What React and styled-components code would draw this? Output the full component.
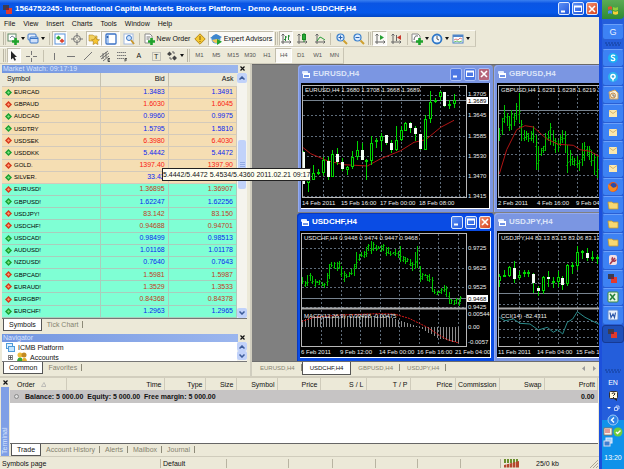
import React from "react";
import styled, { createGlobalStyle, css } from "styled-components";

const Global = createGlobalStyle`
  * { box-sizing: border-box; }
  body { margin: 0; background: #ece9d8; font-family: "Liberation Sans", Arial, sans-serif; font-size: 7px; line-height: 9px; color: #111; overflow: hidden; }
  button { font: inherit; color: inherit; border: 0; padding: 0; margin: 0; background: none; }
  svg { display: block; flex: none; }
  table { border-collapse: collapse; table-layout: fixed; }
`;

/* ---------- shell ---------- */
const Desktop = styled.div`
  display: grid;
  grid-template-columns: minmax(0, 1fr) 22px;
  height: 100vh;
`;
const AppWindow = styled.main`
  display: flex;
  flex-direction: column;
  min-width: 0;
  height: 100vh;
  background: #ece9d8;
  border-right: 3px solid #1c50dc;
`;
const TitleBar = styled.header`
  display: flex;
  align-items: center;
  gap: 3px;
  flex: none;
  height: 17px;
  padding: 0 1px 0 2px;
  color: #fff;
  background: linear-gradient(#3a80f0, #0a55e4 20%, #0558ea 75%, #0347c4);
`;
const Title = styled.h1`
  margin: 0;
  flex: 1;
  font-size: 8px;
  line-height: 12px;
  font-weight: bold;
  white-space: nowrap;
`;
const CaptionButtons = styled.div`
  display: flex;
  gap: 2px;
`;
const CaptionButton = styled.button`
  width: 12px;
  height: 13px;
  display: grid;
  place-items: center;
  border: 1px solid ${(p) => (p.$dim ? "#a9bdf3" : "#dfe9fc")};
  border-radius: 2px;
  background: ${(p) =>
    p.$close ? (p.$dim ? "#b5657a" : "linear-gradient(135deg, #f09070, #d8421c)") : p.$dim ? "#4d78e4" : "linear-gradient(135deg, #5c90f4, #2258dc)"};
`;
const MenuBar = styled.nav`
  display: flex;
  gap: 8px;
  align-items: center;
  flex: none;
  height: 13px;
  padding-left: 4px;
`;
const ToolRow = styled.div`
  display: flex;
  align-items: center;
  flex: none;
  height: 17px;
  width: ${(p) => p.$width}px;
  padding-left: 2px;
  border-top: 1px solid #fbfaf4;
  border-right: 1px solid #c9c5b4;
  border-bottom: 1px solid #d0ccbc;
`;
const Grip = styled.span`
  width: 3px;
  height: 13px;
  margin: 0 1px;
  border-left: 1px solid #b9b5a3;
  border-right: 1px solid #c9c5b5;
`;
const Divider = styled.span`
  width: 1px;
  height: 12px;
  margin: 0 2px;
  background: #c6c2b0;
`;
const Tool = styled.button`
  display: flex;
  align-items: center;
  justify-content: center;
  gap: 2px;
  width: ${(p) => p.$width || 17}px;
  height: 15px;
  white-space: nowrap;
  color: ${(p) => (p.$period ? "#555" : "#111")};
  font-size: ${(p) => (p.$period ? 6 : 7)}px;
  border: 1px solid transparent;
  ${(p) =>
    p.$pressed &&
    css`
      background: #faf9f5;
      border-color: #c1bdac #fff #fff #c1bdac;
    `}
`;

/* ---------- side panels ---------- */
const Middle = styled.div`
  display: grid;
  grid-template-columns: 252px minmax(0, 1fr);
  flex: 1;
  min-height: 0;
`;
const SideColumn = styled.div`
  display: flex;
  flex-direction: column;
  gap: 2px;
  min-height: 0;
  padding: 0 3px 2px 2px;
  border-right: 2px solid #d0cdbf;
`;
const Panel = styled.section`
  display: flex;
  flex-direction: column;
  min-height: 0;
  flex: ${(p) => (p.$grow ? "1" : "none")};
`;
const PanelTitle = styled.div`
  display: flex;
  align-items: center;
  flex: none;
  height: 9px;
  h2 {
    flex: 1;
    margin: 0;
    padding-left: 1px;
    font-size: 7px;
    line-height: 8px;
    font-weight: normal;
    color: #d9e6ff;
    background: linear-gradient(90deg, #7396e0, #9bb6ee);
  }
  button {
    width: 9px;
    height: 9px;
    display: grid;
    place-items: center;
  }
`;
const PanelBody = styled.div`
  display: grid;
  grid-template-columns: minmax(0, 1fr) 10px;
  flex: ${(p) => (p.$height ? "none" : "1")};
  height: ${(p) => (p.$height ? p.$height + "px" : "auto")};
  min-height: 0;
  overflow: hidden;
  background: #fff;
  border-bottom: 1px solid #777;
`;
const QuoteTable = styled.table`
  width: 100%;
  height: 100%;
  th, td {
    padding: 0 3px 0 0;
    text-align: right;
    line-height: 8px;
    white-space: nowrap;
  }
  th {
    height: 13px;
    background: #ece9d8;
    font-weight: normal;
    border-right: 1px solid #c5c1b0;
  }
  th:first-child { text-align: left; padding-left: 5px; width: 98px; }
  th:last-child { border-right: 0; }
`;
const QuoteRow = styled.tr`
  background: ${(p) => (p.$major ? "#7fffd4" : "#f5deb3")};
  color: ${(p) => (p.$up ? "#0a28f0" : p.$major ? "#c23a22" : "#fa1a10")};
  td { border: 1px solid ${(p) => (p.$major ? "#a9cdbc" : "#d3cabb")}; border-left-width: 0; }
`;
const SymbolName = styled.span`
  display: flex;
  align-items: center;
  gap: 2px;
  padding-left: 3px;
  font-size: 6px;
  color: #000;
`;
const ScrollBar = styled.div`
  display: flex;
  flex-direction: column;
  background: #f5f4ee;
`;
const ScrollButton = styled.button`
  flex: none;
  height: ${(p) => (p.$small ? 9 : 10)}px;
  display: grid;
  place-items: center;
  border-radius: 2px;
  background: #c1d2fa;
`;
const ScrollTrack = styled.div`
  flex: 1;
  display: flex;
  flex-direction: column;
  padding-top: 57px;
`;
const ScrollThumb = styled.div`
  height: 49px;
  margin: 0 1px;
  display: grid;
  place-items: center;
  border-radius: 2px;
  background: #c1d2fa;
  color: #8fa8e4;
`;
const Tabs = styled.div`
  display: flex;
  flex: none;
  height: 12px;
  padding-left: 1px;
`;
const Tab = styled.button`
  padding: 0 5px;
  line-height: 10px;
  white-space: nowrap;
  color: #85826f;
  position: relative;
  &::after { content: ""; position: absolute; right: 0; top: 2px; width: 1px; height: 7px; background: #8d8a78; }
  ${(p) =>
    p.$active &&
    css`
      color: #111;
      background: #fff;
      border: solid #555;
      border-width: 0 1px 1px;
      &::after { display: none; }
    `}
`;
const Tree = styled.ul`
  list-style: none;
  margin: 0;
  padding: 0 0 0 4px;
  overflow: hidden;
  li { display: flex; align-items: center; gap: 3px; height: 10px; }
  li + li { padding-left: 2px; }
`;

/* ---------- chart workspace ---------- */
const Right = styled.div`
  display: flex;
  flex-direction: column;
  min-width: 0;
`;
const Workspace = styled.div`
  position: relative;
  flex: 1;
  overflow: hidden;
  background: #808080;
  border-top: 1px solid #696969;
`;
const ChartWindow = styled.section`
  position: absolute;
  left: ${(p) => p.$left}px;
  top: ${(p) => p.$top}px;
  padding: 0 3px 3px;
  border-radius: 4px 4px 0 0;
  background: ${(p) => (p.$active ? "#0a4ce4" : "#7b96e2")};
  box-shadow: inset 1px 1px 0 ${(p) => (p.$active ? "#0a38c0" : "#93aaf0")};
`;
const ChartTitle = styled.div`
  display: flex;
  align-items: center;
  gap: 3px;
  height: 18px;
  color: ${(p) => (p.$active ? "#fff" : "#dce4f8")};
  h2 { flex: 1; margin: 0; font-size: 8px; line-height: 12px; font-weight: bold; }
`;
const ChartBody = styled.div`
  border: solid #fff;
  border-width: 0 1px 1px 0;
`;
const WorkspaceTabs = styled.div`
  display: flex;
  align-items: flex-start;
  flex: none;
  height: 15px;
  padding-left: 1px;
  border-top: 1px solid #6d6d6d;
  button { font-size: 6px; line-height: 12px; padding: 0 7px; }
`;
const Arrows = styled.div`
  margin-left: auto;
  display: flex;
  gap: 8px;
  padding: 4px 3px 0 0;
`;
const QuoteTip = styled.div`
  position: absolute;
  z-index: 3;
  left: 162px;
  top: 168px;
  padding: 1px 0;
  background: #fffff0;
  border: 1px solid #222;
  white-space: nowrap;
`;

/* ---------- terminal ---------- */
const Terminal = styled.section`
  display: grid;
  grid-template-columns: 10px minmax(0, 1fr);
  flex: none;
  height: 80px;
  padding-right: 1px;
  border-top: 2px solid #d2cebe;
`;
const TerminalSide = styled.div`
  display: flex;
  flex-direction: column;
  button { height: 9px; display: grid; place-items: center; }
  h2 {
    flex: 1;
    margin: 0 1px;
    padding-top: 2px;
    writing-mode: vertical-rl;
    transform: rotate(180deg);
    font-size: 7px;
    line-height: 8px;
    font-weight: normal;
    color: #d9e6ff;
    background: #7f9fe6;
  }
`;
const TerminalMain = styled.div`
  display: flex;
  flex-direction: column;
  min-width: 0;
`;
const TerminalBody = styled.div`
  flex: 1;
  background: #fff;
  border-bottom: 1px solid #666;
  overflow: hidden;
`;
const OrdersTable = styled.table`
  width: 100%;
  th {
    height: 12px;
    padding: 0 2px 0 0;
    text-align: right;
    font-weight: normal;
    background: #ece9d8;
    border-right: 1px solid #cfcbbb;
    white-space: nowrap;
  }
  th:first-child { text-align: left; padding-left: 7px; }
  td { height: 13px; padding: 0 3px 0 14px; background: #c6c4c4; font-weight: bold; white-space: pre; }
  td:last-child { text-align: right; padding-left: 0; }
  th span, td span { display: flex; align-items: center; gap: 6px; }
  td span { margin-left: -10px; }
`;
const StatusBar = styled.footer`
  display: grid;
  grid-template-columns: 161px 66px 62px 44px 43px 42px 43px 40px minmax(0, 1fr) 10px;
  align-items: center;
  flex: none;
  height: 13px;
  border-top: 1px solid #d0ccbc;
  span { height: 9px; padding-left: 2px; border-right: 1px solid #b8b4a2; }
`;
const Traffic = styled.div`
  display: flex;
  align-items: center;
  gap: 17px;
  padding-left: 3px;
`;

/* ---------- taskbar ---------- */
const TaskBar = styled.aside`
  display: flex;
  flex-direction: column;
  align-items: stretch;
  height: 100vh;
  background: #245edb;
  color: #fff;
`;
const StartButton = styled.button`
  height: 19px;
  display: grid;
  place-items: center;
  background: linear-gradient(#5cab54, #2f8a32);
  border-radius: 0 0 4px 0;
`;
const TaskButton = styled.button`
  flex: ${(p) => (p.$quick ? "none" : "1")};
  ${(p) => p.$quick && "height: 16px; margin-top: 5px;"}
  display: grid;
  place-items: center;
  border: 1px solid ${(p) => (p.$pressed ? "#163a94" : "#2a5fd4")};
  border-top-color: ${(p) => (p.$pressed ? "#163a94" : "#6ba0fa")};
  border-radius: 3px;
  background: ${(p) => (p.$pressed ? "#1e4fb8" : "#3d82f4")};
  color: #e6f0ff;
  font-size: 9px;
`;
const Dots = styled.div`
  height: ${(p) => p.$height}px;
  display: grid;
  place-items: end center;
  padding-bottom: 3px;
`;
const Language = styled.div`
  display: flex;
  flex-direction: column;
  align-items: center;
  gap: 4px;
  height: 44px;
  padding-top: 2px;
`;
const Tray = styled.div`
  height: 49px;
  display: flex;
  flex-direction: column;
  align-items: center;
  justify-content: space-between;
  padding-bottom: 7px;
  background: #0f92ea;
  svg { overflow: visible; }
`;

/* ---------- icons ---------- */
const Svg = ({ w = 12, h = 12, children, ...rest }) => (
  <svg width={w} height={h} viewBox={`0 0 ${w} ${h}`} fill="none" aria-hidden="true" {...rest}>{children}</svg>
);
const Plus = ({ x, y }) => <path d={`M${x} ${y + 2.5}h7M${x + 3.5} ${y - 1}v7`} stroke="#1fa32c" strokeWidth="2.6" />;
const Axes = () => <path d="M3 1v10M1 9h10M1.500 2.500 3 1l1.500 1.500M9.500 7.500 11 9l-1.500 1.500" stroke="#666" />;
const icons = {
  logo: <><rect x="1" y="1" width="6" height="5" fill="#3c3c50" /><rect x="4" y="4" width="6" height="6" fill="#e23a2c" /><path d="M4 4h3v2H4z" fill="#7c2230" /></>,
  newChart: <><rect x="1" y="1" width="8" height="7" fill="#fff" stroke="#5c8a64" /><path d="M3 5l2-2 3 2" stroke="#789" /><Plus x={5} y={6} /></>,
  profiles: <><rect x="1" y="1" width="8" height="6" rx="1" fill="#e6effc" stroke="#3c78c8" /><rect x="3" y="4" width="8" height="6" rx="1" fill="#cfe0fa" stroke="#3c78c8" /><path d="M3 5.500h8" stroke="#3c78c8" /></>,
  market: <><rect x="1" y="1" width="10" height="10" fill="#fff" stroke="#5a93dd" /><path d="M2 5l2.500-2.500L7 5 4.500 7z" fill="#2aa336" /><path d="M5.500 8L8 5.500 10.500 8 8 10z" fill="#dc4430" /></>,
  crosshair: <><circle cx="6" cy="6" r="3.500" stroke="#777" /><path d="M6 0v5M6 7v5M0 6h5M7 6h5" stroke="#777" /></>,
  star: <><path d="M1 2h4l1 1h3v5H1z" fill="#f2d060" stroke="#b28a28" strokeWidth=".6" /><path d="M7.500 4l1.300 2.500 2.700.3-2 1.900.5 2.800-2.500-1.300L5 11.500l.5-2.800-2-1.900 2.700-.3z" fill="#f7c531" stroke="#a67a1a" strokeWidth=".6" /></>,
  nav: <><rect x="1" y="1" width="10" height="10" rx="1" fill="#fff" stroke="#3a72c6" strokeWidth="1.300" /><path d="M3 2v8" stroke="#a9c8f2" strokeWidth="2" /><circle cx="2.500" cy="4" r="1" fill="#235aa8" /></>,
  tester: <><rect x="1" y="1" width="9" height="10" fill="#fff" stroke="#a4bbe0" /><circle cx="6" cy="5" r="2.500" fill="#cfe4ff" stroke="#3d78c4" /><path d="M8 7l3 4" stroke="#c9982c" strokeWidth="1.800" /></>,
  order: <><path d="M2 1h5l2 2v7H2z" fill="#fff" stroke="#8a8a8a" /><path d="M3.500 4h4M3.500 6h3" stroke="#777" /><Plus x={5} y={6} /></>,
  diamond: <><path d="M6 .8L11.200 6 6 11.200.8 6z" fill="#f5c933" stroke="#b88a1a" /><path d="M6 3v4M6 8v1" stroke="#805a10" /></>,
  expert: <><circle cx="6" cy="6" r="4.500" fill="#4d96d8" /><path d="M0 5l6-4 6 3-5 3z" fill="#3f86cc" /><path d="M2 7c2 4 6 4 8 0l-3-1z" fill="#efc659" /><path d="M7 6l5 2.800L7 12z" fill="#21a32c" /></>,
  bars: <><Axes /><path d="M5.500 3v5M4 6.500h1.500M5.500 4H7M8.500 2v5M8.500 3H10" stroke="#2b8c3a" /></>,
  candles: <><Axes /><path d="M8 0v9" stroke="#158a22" /><rect x="6.500" y="1.500" width="3" height="5" fill="#27a836" stroke="#158a22" /></>,
  line: <><Axes /><path d="M3 8l3-4 2 1 3 2" stroke="#29a038" /></>,
  zoomIn: <><circle cx="4.500" cy="4.500" r="3.500" fill="#dcecff" stroke="#3a80cc" strokeWidth="1.200" /><path d="M2.500 4.500h4M4.500 2.500v4" stroke="#2863b0" /><path d="M7.500 7.500L11 11" stroke="#cfa030" strokeWidth="2" /></>,
  zoomOut: <><circle cx="4.500" cy="4.500" r="3.500" fill="#dcecff" stroke="#3a80cc" strokeWidth="1.200" /><path d="M2.500 4.500h4" stroke="#2863b0" /><path d="M7.500 7.500L11 11" stroke="#cfa030" strokeWidth="2" /></>,
  scroll: <><Axes /><path d="M6 2l4 2.500L6 7z" fill="#26a033" /></>,
  shift: <><Axes /><path d="M6.500 2v6" stroke="#666" /><path d="M11 2L7 4.500 11 7z" fill="#c8382c" /></>,
  indicator: <><path d="M1 1h6l2 2v6H1z" fill="#fff" stroke="#8a8a8a" /><path d="M3 7c1-5 2-4 4-4" stroke="#555" /><Plus x={5} y={6} /></>,
  clock: <><circle cx="6" cy="6" r="4.500" fill="#f1f8ff" stroke="#2f78c8" strokeWidth="1.800" /><path d="M6 3v3l2 1" stroke="#555" /></>,
  template: <><rect x="1" y="2" width="10" height="8" fill="#fff" stroke="#4f85c8" /><path d="M1 3h10" stroke="#4f85c8" strokeWidth="2" /><path d="M2 7l2-1 2 1 2-2 2 1" stroke="#c44" strokeWidth=".7" /><path d="M2 9l3-1 2 1 3-1" stroke="#3a3" strokeWidth=".7" /></>,
  cursor: <path d="M3 1l6 6H6.500l1.500 3-1.500.8L5 8l-2 1.500z" fill="#222" />,
  cross: <path d="M6.500 1v4M6.500 8v4M1 6.500h4M8 6.500h4" stroke="#777" />,
  vline: <path d="M6.500 3v7" stroke="#777" />,
  hline: <path d="M2 6.500h8" stroke="#777" />,
  trend: <path d="M2 10l8-8" stroke="#777" />,
  channel: <><path d="M1 7l8-6M2 9l8-6M4 11l6-5M4 3v6M7 2v6" stroke="#555" strokeWidth=".8" /><path d="M11 8.500H9v3h2M9 10h2" stroke="#333" strokeWidth=".8" /></>,
  fibo: <><path d="M1 2.500h9M1 5.500h9M1 8.500h7" stroke="#777" strokeDasharray="1.500 .5" /><path d="M11 8.500H9v3M9 10h2" stroke="#333" strokeWidth=".8" /></>,
  arrows: <><path d="M1 4l2.500-2.500L6 4 3.500 6zM6 8l2.500-2.500L11 8l-2.500 2.500z" fill="#444" /><path d="M6 2h2v2M3 8h2v2" stroke="#666" /></>,
  label: <><rect x="2.500" y="2.500" width="8" height="8" stroke="#999" strokeDasharray="1 1" /><text x="4" y="9" fontSize="7" fill="#222">T</text></>,
  skype: <><circle cx="6" cy="6" r="5" fill="#1cb1f1" /><path d="M8 4C7 2.500 4 3 4.500 4.800 5 6 8 5.500 7.800 7.500 7.500 9 4.500 9 4 7.500" stroke="#fff" strokeWidth="1.300" /></>,
  messenger: <><circle cx="6" cy="6" r="5" fill="#2cb4ee" /><circle cx="6" cy="5.500" r="2.800" fill="#fff" /><circle cx="6" cy="5.500" r="1.300" fill="#3aa8dd" /><path d="M5 8h2l-1 3z" fill="#fff" /></>,
  outlook: <><path d="M2 3l6-2 3 3v6H3z" fill="#f8efd8" stroke="#c9a165" /><circle cx="6" cy="6.500" r="2.500" stroke="#c38a48" /><path d="M6 5v2h2" stroke="#777" /></>,
  mail: <><rect x="2" y="3" width="8" height="7" fill="#fbe8ae" /><path d="M2 3.500l4 3 4-3" stroke="#c9a860" strokeWidth=".8" /></>,
  firefox: <><circle cx="6" cy="6" r="5" fill="#e0571c" /><circle cx="6.500" cy="5" r="3" fill="#2c4ca8" /><path d="M1 3c1 2 3 1 4 3 1 1 3 1 5-1 0 4-3 6-5 5.500C2 10 1 6 1 3z" fill="#f58a22" /></>,
  folder: <path d="M1 3h4l1 1h5v6H2z" fill="#f8d871" stroke="#c49a34" strokeWidth=".8" />,
  access: <><rect x="2" y="1" width="8" height="10" rx="2" fill="#f2dfe4" /><path d="M3 10l5-6M6 3.500a2 2 0 103 2" stroke="#a4364c" strokeWidth="1.500" /></>,
  excel: <><rect x="1" y="1" width="10" height="10" rx="1" fill="#e6f5e4" stroke="#3b8b44" /><path d="M3 3l5 6M8 3L3 9" stroke="#26803a" strokeWidth="1.600" /></>,
  word: <><rect x="1" y="1" width="10" height="10" rx="1" fill="#eaf1fd" stroke="#5b86cf" /><path d="M3 3.500l1 5L6 5l1.500 3.500 1-5" stroke="#2c56a8" strokeWidth="1.200" /></>,
};
const Icon = ({ name }) => <Svg>{icons[name]}</Svg>;
const Caret = () => <Svg w={4} h={3}><path d="M0 0h4L2 3z" fill="#111" /></Svg>;
const CloseX = () => <Svg w={5} h={5}><path d="M.5.5l4 4M4.500.5l-4 4" stroke="#111" strokeWidth="1.200" /></Svg>;
const Chevron = ({ down }) => <Svg w={6} h={4}><path d={down ? "M.5.5L3 3 5.500.5" : "M.5 3.500L3 1l2.500 2.500"} stroke="#3d5c99" strokeWidth="1.500" /></Svg>;
const WindowGlyph = () => <Svg w={9} h={9}><rect x="1" y="1" width="6" height="3" rx="1" fill="#dfe9ff" /><rect x="2.500" y="3.500" width="6" height="4" stroke="#fff" fill="#6f93e8" /><path d="M2 4h7" stroke="#fff" strokeWidth="2" /></Svg>;
const Dotted = () => <Svg w={16} h={4}><path d="M0 1h16" stroke="#133c94" strokeDasharray="2 1" /><path d="M1 3h15" stroke="#133c94" strokeDasharray="2 1" /></Svg>;

function Captions({ dim }) {
  return (
    <CaptionButtons>
      <CaptionButton $dim={dim} aria-label="Minimize"><Svg w={8} h={8}><path d="M1 6.500h4" stroke="#fff" strokeWidth="2" /></Svg></CaptionButton>
      <CaptionButton $dim={dim} aria-label="Maximize"><Svg w={8} h={8}><rect x=".5" y="1.500" width="7" height="5" stroke="#fff" /><path d="M0 1.500h8" stroke="#fff" strokeWidth="2" /></Svg></CaptionButton>
      <CaptionButton $dim={dim} $close aria-label="Close"><Svg w={8} h={8}><path d="M1 1l6 6M7 1L1 7" stroke="#fff" strokeWidth="1.600" /></Svg></CaptionButton>
    </CaptionButtons>
  );
}

/* ---------- charts ---------- */
const px = (v) => Math.round(v / 3);
const path = (pts) => "M" + pts.map(([x, y]) => `${(x / 3).toFixed(1)} ${(y / 3).toFixed(1)}`).join("L");
const GREEN = "#00d800";
const chartText = { fontSize: 6, fill: "#eee" };

const Candles = ({ data }) => data.map(([x, hi, top, bottom, lo, full]) => (
  <g key={x} shapeRendering="crispEdges" stroke={GREEN}>
    <path d={`M${px(x) + 0.5} ${px(hi)}V${px(lo)}`} />
    <rect x={px(x) - 0.5} y={px(top) + 0.5} width="2" height={Math.max(1, px(bottom) - px(top) - 1)} fill={full ? "#fff" : "#000"} stroke={full ? "none" : GREEN} />
    {full && <rect x={px(x) - 1} y={px(top)} width="3" height={px(bottom) - px(top)} fill="#f4fff4" stroke="none" />}
  </g>
));
const Bars = ({ data }) => data.map(([x, hi, lo], i) => {
  const a = px(hi), b = px(lo), c = px(x);
  const open = a + Math.round((b - a) * (i % 3 === 0 ? 0.3 : 0.7));
  const close = a + Math.round((b - a) * (i % 2 ? 0.2 : 0.6));
  return (
    <g key={x} shapeRendering="crispEdges" stroke="#00c400">
      <path d={`M${c + 0.5} ${a}V${b}`} />
      <path d={`M${c - 1} ${open + 0.5}h1M${c + 1} ${close + 0.5}h1`} opacity=".6" />
    </g>
  );
});

function Chart({ name, view, right, bottom, cols, rows, price, title, ticks, dates, tag, children }) {
  const [x, y, w, h] = view;
  return (
    <svg role="img" aria-label={name} width={w} height={h} viewBox={view.join(" ")} fill="none">
      <rect x={x} y={y} width={w} height={h} fill="#000" />
      <g shapeRendering="crispEdges">
        {cols.map((c) => <path key={c} d={`M${px(c) + 0.5} ${y + 3}V${px(bottom)}`} stroke="#5e6c7a" strokeDasharray="2 2" />)}
        {rows.map((r) => <path key={r} d={`M${x + 2} ${px(r) + 0.5}H${px(right)}`} stroke="#5e6c7a" strokeDasharray="2 2" />)}
        <path d={`M${x + 2} ${px(price) + 0.5}H${px(right)}`} stroke="#77838f" />
      </g>
      {children}
      <rect x={x + 1.5} y={y + 2.5} width={px(right) - x - 1} height={px(bottom) - y - 2} stroke="#b8b8b8" shapeRendering="crispEdges" />
      <text x={x + 4} y={y + 9} {...chartText}>{title}</text>
      {ticks.map(([t, ty]) => <text key={t} x={px(right) + 2} y={px(ty) + 2} {...chartText}>{t}</text>)}
      {dates.map(([t, tx]) => <text key={t} x={px(tx)} y={px(bottom) + 8} {...chartText}>{t}</text>)}
      {tag && <><rect x={px(right) + 1} y={px(price) - 3} width="21" height="7" fill="#fff" /><text x={px(right) + 2} y={px(price) + 3} fontSize="6" fill="#000">{tag}</text></>}
    </svg>
  );
}

const eurusd = [
  [28,265,268,363,363,1],[42,340,345,360,387],[57,305,330,352,352],[71,318,326,330,335],[86,282,292,330,338],[101,282,294,343,350,1],
  [115,262,272,343,343],[130,255,272,297,305,1],[144,285,297,318,325,1],[159,308,313,322,335],[174,265,283,313,318],[188,235,262,283,290],
  [203,240,262,290,292,1],[217,288,291,294,350],[232,220,240,293,305],[246,225,231,238,255],[261,210,220,233,265],[276,215,217,240,245,1],
  [291,230,240,262,270,1],[305,190,230,260,265],[320,190,202,230,235],[334,177,180,203,205],[349,178,180,196,210,1],[364,190,195,213,235,1],
  [378,212,213,258,260,1],[393,155,167,260,260],[407,85,117,167,180],[422,105,112,118,120],[437,83,88,102,115],[451,87,88,128,132,1],
  [466,110,122,128,137],[480,92,112,122,135],
];
const usdjpy = [
  [28,195,200,215,235],[42,183,198,203,205],[57,172,175,200,205],[72,157,177,210,222,1],[86,185,197,208,212],[101,183,188,193,205],
  [115,183,188,193,205],[130,193,195,222,252,1],[144,230,236,245,262,1],[159,200,205,247,255],[173,187,203,210,235,1],[188,205,215,222,238],
  [203,185,203,220,235],[217,200,206,228,243,1],[232,165,168,225,230],[246,160,168,173,195],[261,112,130,170,183],[275,122,127,132,150],
  [290,117,132,148,155,1],[305,127,143,147,155],[320,137,143,148,165],
];
const gbpusd = [
  [28,195,235],[35,165,215],[43,125,180],[50,150,190],[57,160,205],[64,140,200],[72,150,190],[79,120,170],[86,90,180],[94,170,235],[101,200,235],
  [108,205,232],[115,210,238],[123,205,235],[130,190,240],[137,215,320],[144,250,320],[152,255,280],[159,248,270],[166,210,265],[173,205,235],
  [181,180,245],[188,200,250],[195,225,270],[203,230,268],[210,215,250],[217,200,240],[224,205,270],[232,245,330],[239,260,310],[246,280,305],
  [253,285,310],[261,280,315],[268,290,325],[275,240,310],[282,238,295],[290,250,280],[297,250,290],[304,260,310],[312,270,335],[320,280,345],
];
const usdchf = [
  [25,205,225],[32,215,235],[40,198,232],[47,192,215],[54,200,225],[62,210,235],[69,215,222],[76,212,228],[84,218,230],[91,222,237],[98,192,230],
  [105,165,210],[112,160,175],[120,158,180],[128,160,185],[135,155,180],[142,170,205],[150,185,220],[157,195,208],[164,188,203],[172,180,198],
  [180,165,200],[187,130,180],[194,135,155],[201,130,145],[209,125,148],[216,115,145],[223,105,125],[231,97,135],[238,100,125],[245,108,125],
  [253,112,120],[260,108,130],[267,105,125],[275,115,140],[282,115,135],[289,125,140],[297,128,135],[304,120,140],[311,125,148],[318,112,160],
  [326,140,160],[333,145,165],[340,148,160],[348,150,170],[355,160,185],[362,130,180],[370,110,178],[377,170,218],[384,192,212],[392,195,200],
  [399,198,215],[406,195,220],[413,205,250],[421,240,255],[428,245,258],[435,245,252],[442,238,255],[450,228,250],[457,232,265],[465,250,285],
  [472,270,285],[479,272,288],[486,268,285],[494,270,292],[499,262,280],
];
const macdShape = [[25,333],[60,322],[280,322],[310,332],[345,343],[372,354],[385,360],[430,387],[470,396],[500,405]];
const macd = Array.from({ length: 53 }, (_, i) => {
  const x = 25 + i * 9;
  const k = Math.max(1, macdShape.findIndex(([sx]) => sx >= x));
  const [x0, y0] = macdShape[k - 1], [x1, y1] = macdShape[k];
  return [x, y0 + ((x - x0) / (x1 - x0)) * (y1 - y0)];
});

function MdiWindow({ name, left, top, active, children }) {
  return (
    <ChartWindow $left={left} $top={top} $active={active}>
      <ChartTitle $active={active}><WindowGlyph /><h2>{name}</h2><Captions dim={!active} /></ChartTitle>
      <ChartBody>{children}</ChartBody>
    </ChartWindow>
  );
}

function Charts() {
  return (
    <Workspace>
      <MdiWindow name="EURUSD,H4" left={46} top={0}>
        <Chart name="EURUSD chart" view={[7, 20, 188, 125]} right={517} bottom={402} cols={[86,144,203,261,320,378,437,495]} rows={[95,156,218,280,340,398]}
          price={112} tag="1.3689" title="EURUSD,H4  1.3680 1.3708 1.3668 1.3689"
          ticks={[["1.3705",93],["1.3645",156],["1.3585",218],["1.3530",278],["1.3470",340],["1.3415",398]]}
          dates={[["14 Feb 2011",25],["15 Feb 16:00",142],["17 Feb 00:00",259],["18 Feb 08:00",376]]}>
          <path d={path([[25,252],[50,272],[100,293],[150,305],[220,309],[260,287],[320,263],[360,238],[395,230],[440,193],[480,172]])} stroke="#b01414" />
          <Candles data={eurusd} />
        </Chart>
      </MdiWindow>
      <MdiWindow name="GBPUSD,H4" left={242} top={0}>
        <Chart name="GBPUSD chart" view={[7, 20, 188, 125]} right={517} bottom={402} cols={[86,144,203,261,320]} rows={[150,212,273,337,398]}
          price={142} title="GBPUSD,H4  1.6231 1.6238 1.6219 1.6225" ticks={[]} dates={[["2 Feb 2011",24],["4 Feb 16:00",142],["9 Feb 04:00",259]]}>
          <Bars data={gbpusd} />
          <path d={path([[28,333],[50,260],[80,200],[105,188],[130,192],[170,228],[205,244],[250,247],[270,260],[300,265],[345,290]])} stroke="#b01414" />
        </Chart>
      </MdiWindow>
      <MdiWindow name="USDCHF,H4" left={45} top={148} active>
        <Chart name="USDCHF chart" view={[6, 22, 190, 126]} right={517} bottom={410} cols={[82,140,199,257,316,374,433,491]} rows={[117,176,235,293]}
          price={268} tag="0.9468" title="USDCHF,H4  0.9448 0.9474 0.9447 0.9468"
          ticks={[["0.9725",117],["0.9625",176],["0.9525",235],["0.9425",293],["0.00544",315],["0.00",355],["-0.0057",398]]}
          dates={[["6 Feb 2011",20],["9 Feb 12:00",138],["14 Feb 00:00",255],["16 Feb 16:00",370],["21 Feb 04:00",482]]}>
          <Bars data={usdchf} />
          <path d="M8 99.500H172" stroke="#aaa" strokeWidth="2" />
          {macd.map(([x, v]) => <path key={x} shapeRendering="crispEdges" stroke="#8c8c8c" d={`M${px(x) + 0.5} 118V${px(v)}`} />)}
          <path d={path([[22,338],[60,325],[140,318],[250,314],[300,315],[345,328],[400,355],[430,375],[460,392],[495,402]])} stroke="#d81818" strokeDasharray="2 1" />
          <text x="10" y="109" {...chartText}>MACD(12,26,9) -0.00498 -0.00475</text>
        </Chart>
      </MdiWindow>
      <MdiWindow name="USDJPY,H4" left={242} top={148}>
        <Chart name="USDJPY chart" view={[7, 22, 188, 126]} right={517} bottom={410} cols={[86,144,203,261,320]} rows={[158,222,285,335,360,383]}
          price={253} title="USDJPY,H4  83.13 83.15 83.06 83.13" ticks={[]} dates={[["11 Feb 2011",25],["14 Feb 04:00",142],["15 Feb 12:00",259]]}>
          <Candles data={usdjpy} />
          <path d="M9 99.500H172" stroke="#aaa" strokeWidth="2" />
          <path d={path([[28,325],[45,335],[70,330],[90,343],[120,345],[145,363],[172,355],[190,370],[203,362],[218,375],[232,340],[248,330],[262,308],[285,325],[335,350]])} stroke="#2a8c8c" />
          <text x="11" y="109" {...chartText}>CCI(14) -82.4311</text>
        </Chart>
      </MdiWindow>
    </Workspace>
  );
}

/* ---------- data ---------- */
const quotes = [
  ["EURCAD", "1.3483", "1.3491", 1], ["GBPAUD", "1.6030", "1.6045", 0], ["AUDCAD", "0.9960", "0.9975", 1], ["USDTRY", "1.5795", "1.5810", 1],
  ["USDSEK", "6.3980", "6.4030", 0], ["USDDKK", "5.4442", "5.4472", 1], ["GOLD.", "1397.40", "1397.90", 0], ["SILVER.", "33.42", "33.47", 1],
  ["EURUSD!", "1.36895", "1.36907", 0], ["GBPUSD!", "1.62247", "1.62256", 1], ["USDJPY!", "83.142", "83.150", 0], ["USDCHF!", "0.94688", "0.94701", 0],
  ["USDCAD!", "0.98499", "0.98513", 1], ["AUDUSD!", "1.01168", "1.01178", 1], ["NZDUSD!", "0.7640", "0.7643", 1], ["GBPCAD!", "1.5981", "1.5987", 0],
  ["EURAUD!", "1.3529", "1.3533", 0], ["EURGBP!", "0.84368", "0.84378", 0], ["EURCHF!", "1.2963", "1.2965", 1],
];
const orderColumns = [["Time", 98], ["Type", 41], ["Size", 31], ["Symbol", 41], ["Price", 43], ["S / L", 46], ["T / P", 44], ["Price", 45], ["Commission", 44], ["Swap", 45], ["Profit", null]];
const tasks = ["skype", "messenger", "outlook", "mail", "mail", "mail", "mail", "firefox", "folder", "folder", "folder", "access", "logo", "excel", "word", "logo"];

function MarketWatch() {
  return (
    <Panel $grow>
      <PanelTitle><h2>Market Watch: 09:17:19</h2><button aria-label="Close Market Watch"><CloseX /></button></PanelTitle>
      <PanelBody>
        <QuoteTable>
          <thead><tr><th>Symbol</th><th>Bid</th><th>Ask</th></tr></thead>
          <tbody>
            {quotes.map(([name, bid, ask, up], i) => (
              <QuoteRow key={name} $major={i > 7} $up={up}>
                <td><SymbolName><Svg w={7} h={7}><path d="M3.500 0L7 3.500 3.500 7 0 3.500z" fill={up ? "#18a030" : "#d8381c"} /><path d="M3.500 2L5 3.500 3.500 5 2 3.500z" fill={up ? "#7de07c" : "#ff9a70"} /></Svg>{name}</SymbolName></td>
                <td>{bid}</td><td>{ask}</td>
              </QuoteRow>
            ))}
          </tbody>
        </QuoteTable>
        <ScrollBar>
          <ScrollButton aria-label="Scroll up"><Chevron /></ScrollButton>
          <ScrollTrack><ScrollThumb><Svg w={5} h={6}><path d="M0 .5h5M0 2.500h5M0 4.500h5" stroke="#94abe4" /></Svg></ScrollThumb></ScrollTrack>
          <ScrollButton aria-label="Scroll down"><Chevron down /></ScrollButton>
        </ScrollBar>
      </PanelBody>
      <Tabs><Tab $active>Symbols</Tab><Tab>Tick Chart</Tab></Tabs>
    </Panel>
  );
}

function Navigator() {
  return (
    <Panel>
      <PanelTitle><h2>Navigator</h2><button aria-label="Close Navigator"><CloseX /></button></PanelTitle>
      <PanelBody $height={20}>
        <Tree>
          <li><Svg w={9} h={9}><rect x=".5" y=".5" width="6" height="5" stroke="#4d9bd8" fill="#dff1ff" /><rect x="2.500" y="3.500" width="6" height="5" stroke="#4d9bd8" fill="#c6e6ff" /></Svg>ICMB Platform</li>
          <li><Svg w={5} h={5}><rect x=".5" y=".5" width="4" height="4" stroke="#888" /><path d="M1 2.500h3M2.500 1v3" stroke="#333" strokeWidth=".7" /></Svg>
            <Svg w={11} h={10}><circle cx="4" cy="3" r="2.500" fill="#f0bd3a" /><circle cx="8" cy="3" r="2.500" fill="#c28a22" /><path d="M1 10c0-6 6-6 6 0z" fill="#38a838" /><path d="M6 10c0-6 5-5 5 0z" fill="#e6b030" /></Svg>Accounts</li>
        </Tree>
        <ScrollBar><ScrollButton $small aria-label="Scroll up"><Chevron /></ScrollButton><ScrollButton $small aria-label="Scroll down"><Chevron down /></ScrollButton></ScrollBar>
      </PanelBody>
      <Tabs><Tab $active>Common</Tab><Tab>Favorites</Tab></Tabs>
    </Panel>
  );
}

function TerminalPanel() {
  return (
    <Terminal>
      <TerminalSide><button aria-label="Close Terminal"><CloseX /></button><h2>Terminal</h2></TerminalSide>
      <TerminalMain>
        <TerminalBody>
          <OrdersTable>
            <colgroup><col width="56" />{orderColumns.map(([n, w], i) => <col key={n + i} width={w || undefined} />)}</colgroup>
            <thead><tr><th><span>Order <Svg w={5} h={5}><path d="M.5 4.500L3 .5l2 4z" stroke="#aaa" strokeWidth=".7" /></Svg></span></th>{orderColumns.map(([n], i) => <th key={n + i}>{n}</th>)}</tr></thead>
            <tbody><tr>
              <td colSpan="11"><span><Svg w={5} h={5}><circle cx="2.500" cy="2.500" r="2" stroke="#888" fill="#ddd" /></Svg>{"Balance: 5 000.00  Equity: 5 000.00  Free margin: 5 000.00"}</span></td>
              <td>0.00</td>
            </tr></tbody>
          </OrdersTable>
        </TerminalBody>
        <Tabs><Tab $active>Trade</Tab>{["Account History", "Alerts", "Mailbox", "Journal"].map((t) => <Tab key={t}>{t}</Tab>)}</Tabs>
      </TerminalMain>
    </Terminal>
  );
}

const T = ({ icon, width, pressed, caret, children, label }) => (
  <Tool $width={width} $pressed={pressed} aria-label={children ? undefined : label || icon}><Icon name={icon} />{children}{caret && <Caret />}</Tool>
);

export default function App() {
  return (
    <>
      <Global />
      <Desktop>
        <AppWindow>
          <TitleBar>
            <Svg w={10} h={10}>{icons.logo}</Svg>
            <Title>1564752245: International Capital Markets Brokers Platform - Demo Account - USDCHF,H4</Title>
            <Captions />
          </TitleBar>
          <MenuBar>{["File", "View", "Insert", "Charts", "Tools", "Window", "Help"].map((m) => <button key={m}>{m}</button>)}</MenuBar>
          <ToolRow $width={476}>
            <Grip />
            <T icon="newChart" width={18} caret /><T icon="profiles" width={22} caret /><Divider />
            <T icon="market" width={15} pressed /><T icon="crosshair" width={19} /><T icon="star" width={15} pressed /><T icon="nav" width={19} pressed /><T icon="tester" width={17} /><Divider />
            <T icon="order" width={49}>New Order</T><T icon="diamond" width={17} /><T icon="expert" width={66} pressed>Expert Advisors</T>
            <Grip />
            <T icon="bars" width={14} pressed /><T icon="candles" width={18} /><T icon="line" /><Divider />
            <T icon="zoomIn" /><T icon="zoomOut" /><Grip />
            <T icon="scroll" width={15} pressed /><T icon="shift" width={18} /><Divider />
            <T icon="indicator" width={20} caret /><T icon="clock" width={20} caret /><T icon="template" width={22} caret />
          </ToolRow>
          <ToolRow $width={344}>
            <Grip />
            <T icon="cursor" width={14} pressed /><T icon="cross" width={20} /><Divider />
            <T icon="vline" /><T icon="hline" /><T icon="trend" /><T icon="channel" /><T icon="fibo" />
            <Tool aria-label="Text">A</Tool>
            <T icon="label" />
            <T icon="arrows" width={22} caret />
            <Grip />
            {["M1", "M5", "M15", "M30", "H1", "H4", "D1", "W1", "MN"].map((p) => <Tool key={p} $period $pressed={p === "H4"}>{p}</Tool>)}
          </ToolRow>
          <Middle>
            <SideColumn><MarketWatch /><Navigator /></SideColumn>
            <Right>
              <Charts />
              <WorkspaceTabs>
                <Tab>EURUSD,H4</Tab><Tab $active>USDCHF,H4</Tab><Tab>GBPUSD,H4</Tab><Tab>USDJPY,H4</Tab>
                <Arrows><Svg w={3} h={5}><path d="M3 0v5L0 2.500z" fill="#999" /></Svg><Svg w={3} h={5}><path d="M0 0v5l3-2.500z" fill="#999" /></Svg></Arrows>
              </WorkspaceTabs>
            </Right>
          </Middle>
          <TerminalPanel />
          <StatusBar>
            <span>Symbols page</span><span>Default</span><span /><span /><span /><span /><span /><span />
            <Traffic>
              <Svg w={15} h={9}><path d="M0 2h15" stroke="#6a8f2c" strokeWidth="4" strokeDasharray="2 1" /><path d="M0 8.500V6l15-4v6.500z" fill="#b5472c" /><path d="M2.500 0v9M5.500 0v9M8.500 0v9M11.500 0v9" stroke="#ece9d8" strokeWidth=".6" /></Svg>
              25/0 kb
            </Traffic>
            <Svg w={9} h={9}><path d="M1 9l8-8M4 9l5-5M7 9l2-2" stroke="#aaa693" /></Svg>
          </StatusBar>
        </AppWindow>
        <TaskBar>
          <StartButton aria-label="Start"><Svg><path d="M1 3c2-1 3-1 4 0v3c-1-1-3-1-4 0z" fill="#e8502c" /><path d="M6 3c2 1 3 1 5 0v3c-2 1-3 1-5 0z" fill="#8fd03c" /><path d="M1 7c2-1 3-1 4 0v3c-1-1-3-1-4 0z" fill="#4a8cf0" /><path d="M6 7c2 1 3 1 5 0v3c-2 1-3 1-5 0z" fill="#f7cf38" /></Svg></StartButton>
          <TaskButton $quick>G</TaskButton>
          <Dots $height={9}><Dotted /></Dots>
          {tasks.map((t, i) => <TaskButton key={i} $pressed={i === 15} aria-label={t}><Icon name={t} /></TaskButton>)}
          <Dots $height={33}><Dotted /></Dots>
          <Language>
            <span>EN</span>
            <Svg w={9} h={10}><rect x=".5" y=".5" width="8" height="7" rx="1" fill="#fffbe0" stroke="#333" /><path d="M3 3c0-1.500 3-1.500 3 0L4.500 4.500V5M4.500 6v1" stroke="#222" /><path d="M5 8l3 2V8z" fill="#222" /></Svg>
            <Svg w={14} h={6}><path d="M1 2h4L3 4z" fill="#fff" /><path d="M8.500 2.500h3v3h-3zM10 2.500V1h3v3h-1.500" stroke="#dce8ff" strokeWidth=".8" /></Svg>
          </Language>
          <Tray>
            <Svg w={20} h={32}>
              <circle cx="10" cy="0" r="5" fill="#2f83e6" stroke="#9ccaf8" />
              <path d="M11 -2.500L8.500 0 11 2.500" stroke="#fff" strokeWidth="1.400" />
              <path d="M1 8h8v7H1z" fill="#f3efe8" stroke="#9a6c50" strokeWidth=".8" /><path d="M2 10h5M2 12h5" stroke="#c44" />
              <circle cx="15" cy="12" r="4.500" fill="#6fcc3c" /><path d="M13 12l1.500 1.500L17.500 10.500" stroke="#fff" strokeWidth="1.400" />
              <rect x="3" y="18" width="6" height="5" fill="#9cd0f8" stroke="#eef" /><rect x="1" y="21" width="6" height="5" fill="#3f7ed0" stroke="#dde" />
            </Svg>
            <span>13:20</span>
          </Tray>
        </TaskBar>
      </Desktop>
      <QuoteTip role="tooltip">5.4442/5.4472 5.4534/5.4360 2011.02.21 09:17</QuoteTip>
    </>
  );
}
